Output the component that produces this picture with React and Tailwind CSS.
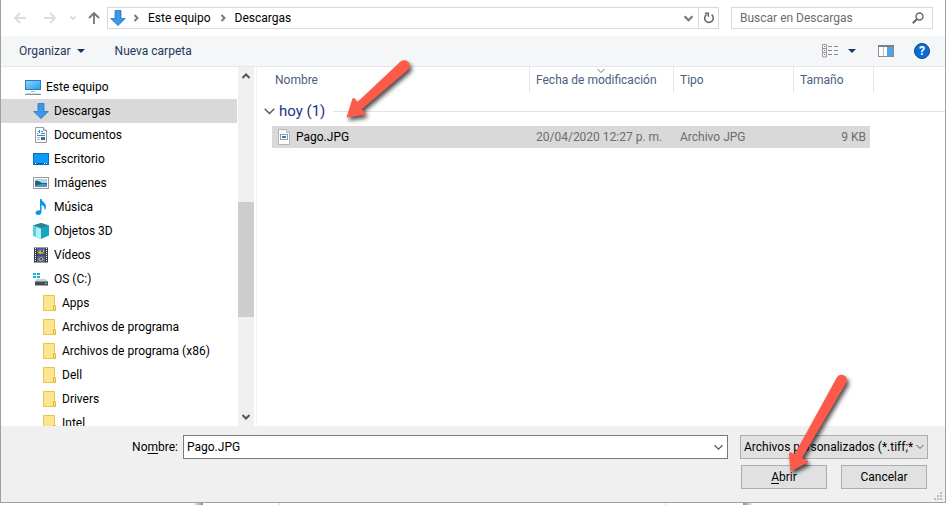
import React from "react";
import clsx from "clsx";

const PcIcon = () => (
  <svg width="16" height="16" viewBox="0 0 16 16">
    <defs>
      <linearGradient id="screen" x1="0" y1="0" x2="1" y2="1">
        <stop offset="0" stopColor="#8fd6fb" />
        <stop offset="1" stopColor="#1fa0f0" />
      </linearGradient>
    </defs>
    <rect x="0.5" y="1.5" width="15" height="9" fill="url(#screen)" stroke="#2c7fb5" />
    <path d="M6 12.5h4" stroke="#9fb2c0" />
    <path d="M0 15.5h16" stroke="#7d97ab" />
    <path d="M1 14.5h14" stroke="#cfdbe4" />
  </svg>
);

const DownloadIcon = () => (
  <svg width="16" height="16" viewBox="0 0 16 16">
    <path
      d="M5 0.5h6v8h4.3L8 15.6 0.7 8.5H5z"
      fill="#3d97e6"
      stroke="#2279c4"
      strokeWidth="0.8"
    />
  </svg>
);

const DocumentIcon = () => (
  <svg width="16" height="16" viewBox="0 0 16 16">
    <path d="M2.5 0.5h8l3 3v12h-11z" fill="#fff" stroke="#9a9a9a" />
    <path d="M10.5 0.5v3h3" fill="#e4e4e4" stroke="#9a9a9a" />
    <path d="M4 6.5h1M5 4.5h1M6.5 3v3M8 4.5h2M8 6.5h4M4 8.5h8" fill="none" stroke="#1f8fe0" />
    <path d="M4 10.5h3M4 12.5h3" stroke="#a9b4bd" />
    <rect x="8" y="10" width="4" height="3" fill="#3c6f8c" />
  </svg>
);

const DesktopIcon = () => (
  <svg width="16" height="16" viewBox="0 0 16 16">
    <rect x="0.5" y="2.5" width="15" height="11" fill="#0a9bfc" stroke="#0b6db5" />
    <path d="M1 12.5h14" stroke="#0b5c98" />
    <path d="M2 12.5h1M11 12.5h1M13 12.5h1" stroke="#fff" />
  </svg>
);

const PicturesIcon = () => (
  <svg width="16" height="16" viewBox="0 0 16 16">
    <rect x="0.5" y="2.5" width="15" height="11" fill="#fff" stroke="#9a9a9a" />
    <rect x="2" y="4" width="12" height="8" fill="#a5dbf8" />
    <path d="M2 6c3-1 5 1 7 2h5v4H2z" fill="#2f5f6a" />
    <path d="M2 10.5c4-1 8-2 12-1V12H2z" fill="#4a92cc" />
  </svg>
);

const MusicIcon = () => (
  <svg width="16" height="16" viewBox="0 0 16 16">
    <path
      d="M7 0h1.5c.5 3 5 4 4.5 8.5-.2 1.3-.8 2.1-1.5 2.7.6-2.7-.5-4.4-3-5.2v7c0 1.8-1.3 3-3.2 3C3.7 16 2.5 15.2 2.5 13.8c0-1.7 2-3 4.5-2.6z"
      fill="#0a95f5"
    />
  </svg>
);

const ObjectsIcon = () => (
  <svg width="16" height="16" viewBox="0 0 16 16">
    <path d="M8 0l8 2.5v10L8 16 0 12.5v-10z" fill="#13a7c4" />
    <path d="M8 0l8 2.5L8 5 0 2.5z" fill="#35818f" />
    <path d="M0 2.5L8 5v11l-8-3.5z" fill="#57cde0" />
    <path d="M3 4.5L8 6v10l-5-2z" fill="#b6f0f7" />
  </svg>
);

const VideosIcon = () => (
  <svg width="16" height="16" viewBox="0 0 16 16">
    <rect x="1" y="0.5" width="14" height="15" fill="#3a3a3a" />
    <path d="M2.5 1v14M13.5 1v14" stroke="#fff" strokeDasharray="1 1" />
    <rect x="4" y="1" width="8" height="6.5" fill="#3b69b8" />
    <rect x="4" y="8.5" width="8" height="6.5" fill="#3b69b8" />
    <path d="M5 5l2-2 2 1 2-2v3l-2 2H6zM5 12l3-2 3 2-2 2H7z" fill="#d3a434" />
    <path d="M8 3h2v2H8zM7 11h2v2H7z" fill="#b2363b" />
  </svg>
);

const DriveIcon = () => (
  <svg width="16" height="16" viewBox="0 0 16 16">
    <path d="M0 2h3v2H0zM4 2h3v2H4zM0 5h3v2H0zM4 5h3v2H4z" fill="#13b4e8" />
    <path d="M3.5 8H13l2 3H2z" fill="#cdd0d3" />
    <rect x="2" y="10.5" width="13" height="4" fill="#454c50" />
    <rect x="12" y="12" width="2" height="1" fill="#4fe07a" />
  </svg>
);

const FolderIcon = () => (
  <svg width="13" height="16" viewBox="0 0 13 16">
    <path d="M0.5 0.5h11v15h-11z" fill="#fde48e" stroke="#e8c54e" />
    <path d="M10.5 10.5h2v5h-2z" fill="#fbdc74" stroke="#e3bc3f" />
  </svg>
);

const ImageFileIcon = () => (
  <svg width="12" height="16" viewBox="0 0 12 16">
    <path d="M0.5 0.5h8l3 3v12h-11z" fill="#fdfdfd" stroke="#b4b4b4" />
    <path d="M8.5 0.5v3h3" fill="#eee" stroke="#b4b4b4" />
    <rect x="2.5" y="5.5" width="7" height="5" fill="#fff" stroke="#9a9a9a" />
    <rect x="4" y="7" width="4" height="2" fill="#3f7fb5" />
  </svg>
);

const Chevron = ({ className, dir = "down", size = 8, weight = 1 }) => (
  <svg
    width={size}
    height={size}
    viewBox="0 0 8 8"
    fill="none"
    stroke="currentColor"
    strokeWidth={weight}
    className={clsx("shrink-0", className)}
  >
    {dir === "down" && <path d="M0.5 2L4 5.5 7.5 2" />}
    {dir === "up" && <path d="M0.5 6L4 2.5 7.5 6" />}
    {dir === "right" && <path d="M2.5 1l3 3-3 3" />}
  </svg>
);

const Caret = () => (
  <svg width="8" height="4" viewBox="0 0 8 4" className="shrink-0">
    <path d="M0 0h8L4 4z" fill="#1a3763" />
  </svg>
);

const NavArrow = ({ dir }) => (
  <svg width="12" height="12" viewBox="0 0 12 12" fill="none" stroke="currentColor" strokeWidth="1.8">
    {dir === "left" && <path d="M12 6H1M6 1L1 6l5 5" />}
    {dir === "right" && <path d="M0 6h11M6 1l5 5-5 5" />}
    {dir === "up" && <path d="M6 12V1M1 6l5-5 5 5" />}
  </svg>
);

const treeItems = [
  { label: "Este equipo", icon: PcIcon, level: 0 },
  { label: "Descargas", icon: DownloadIcon, level: 1, selected: true },
  { label: "Documentos", icon: DocumentIcon, level: 1 },
  { label: "Escritorio", icon: DesktopIcon, level: 1 },
  { label: "Imágenes", icon: PicturesIcon, level: 1 },
  { label: "Música", icon: MusicIcon, level: 1 },
  { label: "Objetos 3D", icon: ObjectsIcon, level: 1 },
  { label: "Vídeos", icon: VideosIcon, level: 1 },
  { label: "OS (C:)", icon: DriveIcon, level: 1 },
  { label: "Apps", icon: FolderIcon, level: 2 },
  { label: "Archivos de programa", icon: FolderIcon, level: 2 },
  { label: "Archivos de programa (x86)", icon: FolderIcon, level: 2 },
  { label: "Dell", icon: FolderIcon, level: 2 },
  { label: "Drivers", icon: FolderIcon, level: 2 },
  { label: "Intel", icon: FolderIcon, level: 2 },
];

const indents = ["pl-6", "pl-8", "pl-10"];

const NavigationBar = () => (
  <div className="flex h-9 shrink-0 items-center pr-3">
    <div className="flex w-[106px] shrink-0 items-center pl-[13px]">
      <button aria-label="Atrás" className="text-[#dcdcdc]">
        <NavArrow dir="left" />
      </button>
      <button aria-label="Adelante" className="ml-[18px] text-[#dcdcdc]">
        <NavArrow dir="right" />
      </button>
      <button aria-label="Recientes" className="ml-[14px] text-[#d4d4d4]">
        <Chevron size={6} weight={2} />
      </button>
      <button aria-label="Subir" className="ml-3 text-[#767676]">
        <NavArrow dir="up" />
      </button>
    </div>
    <div className="flex h-[22px] grow items-center border border-[#d9d9d9]">
      <nav className="flex grow items-center pl-[2px]">
        <DownloadIcon />
        <Chevron dir="right" weight={2} className="ml-[6px] text-[#7a7a7a]" />
        <a href="#equipo" className="ml-2">Este equipo</a>
        <Chevron dir="right" weight={2} className="ml-2 text-[#7a7a7a]" />
        <a href="#descargas" className="ml-2">Descargas</a>
      </nav>
      <button aria-label="Historial" className="flex w-5 justify-center text-[#7a7a7a]">
        <Chevron size={9} weight={2} />
      </button>
      <button
        aria-label="Actualizar"
        className="flex h-full w-5 items-center justify-center border-l border-[#d9d9d9]"
      >
        <svg width="12" height="12" viewBox="0 0 12 12" fill="none" stroke="#6a6a6a" strokeWidth="1.6">
          <path d="M3.5 2.6A4.3 4.3 0 1 0 8.6 2.7" />
          <path d="M2 1.2h3.3v3.5" />
        </svg>
      </button>
    </div>
    <div className="ml-3 flex h-[22px] w-[202px] shrink-0 items-center border border-[#d9d9d9] px-2">
      <input
        aria-label="Buscar"
        placeholder="Buscar en Descargas"
        className="min-w-0 grow outline-none placeholder:text-[#6d6d6d]"
      />
      <svg width="12" height="12" viewBox="0 0 12 12" fill="none" stroke="#666" strokeWidth="1.4">
        <circle cx="7.5" cy="4.5" r="3.5" />
        <path d="M5 7L0.8 11.2" strokeWidth="2" />
      </svg>
    </div>
  </div>
);

const Toolbar = () => (
  <div className="flex h-[31px] shrink-0 items-center border-b border-[#e5e8eb] bg-[#f5f6f7] pr-[15px] pl-[18px] text-[#1e395b]">
    <button className="flex items-center gap-[6px]">
      Organizar
      <Caret />
    </button>
    <button className="ml-[30px]">Nueva carpeta</button>
    <div className="grow" />
    <button aria-label="Vista" className="flex items-center gap-[10px]">
      <svg width="16" height="14" viewBox="0 0 16 14" fill="none">
        <path d="M0.5 0.5h4v12.5h-4zM0.5 4.5h4M0.5 8.5h4" stroke="#9a9a9a" />
        <path d="M2 2.5h1" stroke="#777" />
        <path d="M2 6.5h1" stroke="#2f80d0" />
        <path d="M2 10.5h1" stroke="#d04040" />
        <path d="M6 2.5h4M12 2.5h4M6 6.5h4M12 6.5h4M6 10.5h4M12 10.5h4" stroke="#8a8a8a" />
      </svg>
      <Caret />
    </button>
    <button aria-label="Panel de vista previa" className="ml-[22px]">
      <svg width="16" height="12" viewBox="0 0 16 12">
        <rect x="0.5" y="0.5" width="15" height="11" fill="#fff" stroke="#8d8d8d" />
        <path d="M0 1h16" stroke="#808080" strokeWidth="2" />
        <path d="M5.5 2v9" stroke="#c0c0c0" />
        <rect x="9" y="2" width="6" height="9" fill="#4aa5ec" />
      </svg>
    </button>
    <button
      aria-label="Ayuda"
      className="ml-5 flex size-4 items-center justify-center rounded-full border border-[#084c93] bg-[#0a6cce] text-xs font-bold text-white"
    >
      ?
    </button>
  </div>
);

const FolderTree = () => (
  <aside className="flex w-[256px] shrink-0 border-r border-[#f3f3f3]">
    <ul className="min-w-0 grow overflow-hidden pt-2">
      {treeItems.map(({ label, icon: Icon, level, selected }) => (
        <li
          key={label}
          className={clsx(
            "mr-px flex h-6 items-center",
            indents[level],
            selected && "bg-[#d9d9d9]"
          )}
        >
          <span className={clsx("flex shrink-0", level === 2 ? "mr-[6px] pl-[2px]" : "mr-[5px]")}>
            <Icon />
          </span>
          <span className="whitespace-nowrap">{label}</span>
        </li>
      ))}
    </ul>
    <div className="mr-[2px] flex w-4 shrink-0 flex-col items-center bg-[#f0f0f0] py-[5px] text-[#555]">
      <Chevron dir="up" weight={2} />
      <div className="grow-[122]" />
      <div className="w-full grow-[115] bg-[#cdcdcd]" />
      <div className="grow-[96]" />
      <Chevron weight={2} />
    </div>
  </aside>
);

const FileList = () => (
  <div className="min-w-0 grow">
    <table className="w-full table-fixed border-separate border-spacing-0 text-left">
      <colgroup>
        <col className="w-[15px]" />
        <col className="w-[258px]" />
        <col className="w-36" />
        <col className="w-[120px]" />
        <col className="w-20" />
        <col />
      </colgroup>
      <thead className="text-[#4c607a]">
        <tr className="h-[25px]">
          <td />
          <th className="border-r border-[#e5e5e5] pl-[3px] font-normal">Nombre</th>
          <th className="relative border-r border-[#e5e5e5] pl-[6px] font-normal">
            <Chevron className="absolute top-0 left-[67px] text-[#777]" />
            Fecha de modificación
          </th>
          <th className="border-r border-[#e5e5e5] pl-[6px] font-normal">Tipo</th>
          <th className="border-r border-[#e5e5e5] pl-[6px] font-normal">Tamaño</th>
          <td />
        </tr>
      </thead>
      <tbody>
        <tr className="h-[34px]">
          <td colSpan={6} className="pt-1 pl-[7px]">
            <div className="flex items-center">
              <Chevron size={11} className="text-[#555]" />
              <span className="ml-[4px] text-[15px] leading-5 text-[#1e3287]">hoy (1)</span>
              <span className="ml-2 h-px grow bg-[#e2e2e2]" />
            </div>
          </td>
        </tr>
        <tr className="h-[22px] text-[#6d6d6d]">
          <td />
          <td className="bg-[#d9d9d9] pl-[6px] text-black">
            <div className="flex items-center gap-[6px]">
              <ImageFileIcon />
              Pago.JPG
            </div>
          </td>
          <td className="bg-[#d9d9d9] pl-[6px]">20/04/2020 12:27 p. m.</td>
          <td className="bg-[#d9d9d9] pl-[6px]">Archivo JPG</td>
          <td className="p-0 pr-1">
            <div className="flex h-[22px] items-center justify-end bg-[#d9d9d9] pr-1">9 KB</div>
          </td>
          <td />
        </tr>
      </tbody>
    </table>
  </div>
);

const FilePointer = () => (
  <svg
    width="80"
    height="72"
    viewBox="340 56 80 72"
    className="pointer-events-none absolute -top-[11px] left-[339px] drop-shadow-[2px_3px_2px_rgba(0,0,0,0.7)]"
  >
    <path
      d="M346.5 117.5L352.5 98.5Q354 97.5 355 99L357.5 102L400.5 61.5C406 57.5 413 64 408.5 69.5L361.5 109.5L365.5 112.5Q366 114.5 364 115z"
      fill="#fc5a4b"
    />
  </svg>
);

const OpenPointer = () => (
  <svg
    width="72"
    height="106"
    viewBox="784 370 72 106"
    className="pointer-events-none absolute -top-[95px] left-[43px] drop-shadow-[2px_3px_2px_rgba(0,0,0,0.7)]"
  >
    <path
      d="M790.5 471.5L789 453.5Q790 451.5 791.5 452.5L794.5 454.5L836.5 378C840 371.5 849 376 846.5 382.5L802 458L807.5 460.5Q809 462 807 463z"
      fill="#fc5a4b"
    />
  </svg>
);

const Footer = () => (
  <footer className="relative shrink-0 bg-[#f0f0f0] pt-[9px] pr-[17px] pb-[13px]">
    <div className="flex h-6 items-center">
      <label htmlFor="filename" className="w-[177px] shrink-0 text-right">
        No<span className="underline underline-offset-2">m</span>bre:
      </label>
      <div className="ml-[5px] flex h-6 grow items-center border border-[#7a7a7a] bg-white pr-1 pl-[3px]">
        <input id="filename" defaultValue="Pago.JPG" className="min-w-0 grow outline-none" />
        <button aria-label="Mostrar nombres" className="text-[#555]">
          <Chevron size={9} />
        </button>
      </div>
      <div className="relative ml-3 h-6 w-[188px] shrink-0">
        <select
          aria-label="Tipo de archivo"
          className="h-6 w-full appearance-none border border-[#adadad] bg-[#e1e1e1] pr-3 pl-[3px]"
        >
          <option>Archivos personalizados (*.tiff;*</option>
        </select>
        <Chevron className="pointer-events-none absolute top-2 right-1 text-[#555]" />
      </div>
    </div>
    <div className="mt-[6px] flex justify-end gap-[14px] pr-px">
      <div className="relative">
        <button className="h-6 w-[86px] border border-[#adadad] bg-[#e1e1e1]">
          <span className="underline underline-offset-2">A</span>brir
        </button>
        <OpenPointer />
      </div>
      <button className="h-6 w-[86px] border border-[#adadad] bg-[#e1e1e1]">Cancelar</button>
    </div>
    <svg width="8" height="8" viewBox="0 0 8 8" fill="#bdbdbd" className="absolute right-[3px] bottom-[2px]">
      <path d="M6 0h2v2H6zM3 3h2v2H3zM6 3h2v2H6zM0 6h2v2H0zM3 6h2v2H3zM6 6h2v2H6z" />
    </svg>
  </footer>
);

const App = () => {
  return (
    <div className="flex h-screen flex-col overflow-hidden bg-white font-[Roboto,'Open_Sans',sans-serif] text-xs text-black">
      <div className="mr-px flex min-h-0 grow flex-col border-x border-b border-[#a0a0a0]">
        <NavigationBar />
        <Toolbar />
        <main className="relative flex min-h-0 grow">
          <FolderTree />
          <FileList />
          <FilePointer />
        </main>
        <Footer />
      </div>
      <div className="flex h-[2px] shrink-0">
        <div className="w-[203px] bg-linear-to-r from-white from-95% to-[#8c8c8c]" />
        <div className="w-[77px] border-r border-[#d9d9d9]" />
        <div className="grow border-r border-[#d9d9d9]" />
        <div className="w-[77px]" />
        <div className="w-[204px] bg-linear-to-r from-[#8c8c8c] to-white to-5%" />
      </div>
    </div>
  );
};

export default App;
